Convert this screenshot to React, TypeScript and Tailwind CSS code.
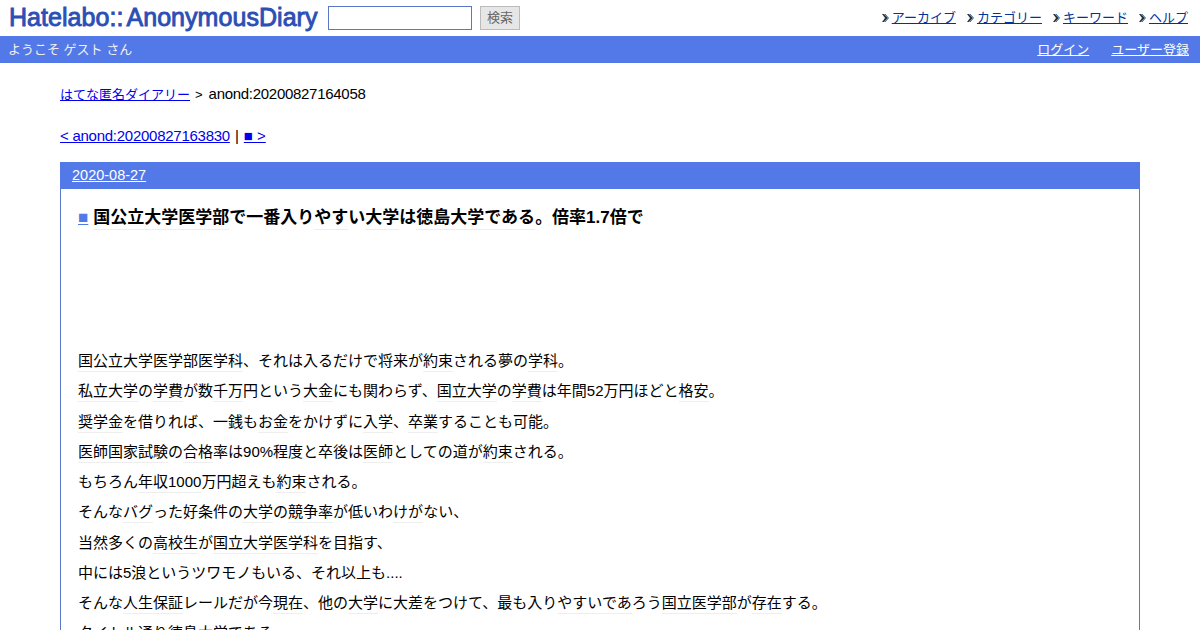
const font = "font-['Liberation_Sans','Noto_Sans_CJK_JP',sans-serif]";

function K({ children }: { children: React.ReactNode }) {
  return <span className="border-b border-[#eeeeee] pb-[2px]">{children}</span>;
}

function Nav({ label }: { label: string }) {
  return (
    <span className="flex items-center gap-[3px]">
      <svg width="7" height="10" viewBox="0 0 7 10">
        <path d="M0 1 L2 1 L6 5 L2 9 L0 9 L3 5 Z" fill="#333333" />
        <path d="M3 1 L6.5 5 L3 9" stroke="#2a6fb8" strokeWidth="1" fill="none" />
      </svg>
      <a className="text-[#003399] underline" href="#">{label}</a>
    </span>
  );
}

export default function App() {
  return (
    <div className={`${font} h-[630px] overflow-hidden bg-white text-black`}>
      <header className="flex h-[36px] items-center justify-between pl-[9px] pr-[12px]">
        <div className="flex items-center">
          <span className="flex w-[319px] whitespace-nowrap text-[25px] tracking-[0.05px] text-[#2b4fb5] [-webkit-text-stroke:0.9px_#2b4fb5]">
            <span className="mr-[3px]">Hatelabo::</span>
            <span>AnonymousDiary</span>
          </span>
          <input className="h-[24px] w-[144px] border border-[#5a77c8] bg-white" />
          <button className="ml-[8px] h-[24px] w-[40px] border border-[#bbbbbb] bg-[#e6e6e6] text-[13px] text-[#666666]">検索</button>
        </div>
        <nav className="flex gap-[11px] text-[13px]">
          <Nav label="アーカイブ" />
          <Nav label="カテゴリー" />
          <Nav label="キーワード" />
          <Nav label="ヘルプ" />
        </nav>
      </header>
      <div className="flex h-[27px] items-center justify-between bg-[#5279e7] pl-[8px] pr-[11px] text-[13px] text-white">
        <span className="text-[#f0f0f0]">ようこそ ゲスト さん</span>
        <span className="flex gap-[22px]">
          <a className="underline" href="#">ログイン</a>
          <a className="underline" href="#">ユーザー登録</a>
        </span>
      </div>
      <main className="px-[60px]">
        <p className="mt-[21px] h-[20px] text-[13px] leading-[20px]">
          <a className="text-[#0000ee] underline" href="#">はてな匿名ダイアリー</a>
          <span className="ml-[5px] mr-[6px]">&gt;</span>
          <span className="text-[15px] tracking-[-0.29px]">anond:20200827164058</span>
        </p>
        <p className="mt-[22px] h-[20px] text-[15px] leading-[20px]">
          <a className="tracking-[-0.26px] text-[#0000ee] underline" href="#">&lt; anond:20200827163830</a>
          <span className="mx-[5px]">|</span>
          <a className="text-[#0000ee] underline" href="#">■ &gt;</a>
        </p>
        <section className="mt-[16px] border border-t-0 border-[#5a77c8]">
          <div className="-mx-px flex h-[27px] items-center bg-[#5279e7] pl-[12px] text-[14.5px] text-white">
            <a className="underline" href="#">2020-08-27</a>
          </div>
          <div className="px-[17px]">
            <h3 className="mt-[17px] h-[24px] text-[17px] font-bold leading-[24px]">
              <a className="mr-[5px] font-normal text-[#5279e7] underline" href="#">■</a>
              <K>国公立大学医学部</K>で一番入り<K>やす</K>い<K>大学</K>は<K>徳島大学である</K>。倍率1.7倍で
            </h3>
            <div className="mt-[116px] text-[15px] leading-[30.25px]">
              <p><K>国公立大学医学部医学科</K>、それは入るだけで将来が<K>約束</K>される夢の<K>学科</K>。</p>
              <p><K>私立大学</K>の<K>学費</K>が数<K>千万</K>円という<K>大金</K>にも関わらず、<K>国立大学</K>の<K>学費</K>は年間52万円ほどと<K>格安</K>。</p>
              <p><K>奨学金</K>を借りれば、一銭も<K>お金</K>をかけずに<K>入学</K>、<K>卒業</K>することも可能。</p>
              <p><K>医師国家試験</K>の<K>合格</K>率は90%程度と卒後は<K>医師</K>としての道が<K>約束</K>される。</p>
              <p>もちろん<K>年収1000</K>万円超えも<K>約束</K>される。</p>
              <p>そんな<K>バグ</K>った好条件の<K>大学</K>の<K>競争率</K>が低いわ<K>けが</K>ない、</p>
              <p>当然多くの<K>高校生</K>が<K>国立大学医学科</K>を目指す、</p>
              <p>中には5浪というツワモノもいる、それ以上も....</p>
              <p>そんな<K>人生保証</K>レールだが今<K>現在</K>、他の<K>大学</K>に大差をつけて、最も入り<K>やすいであ</K>ろう<K>国立医学部</K>が<K>存在</K>する。</p>
              <p>タイトル通り徳島大学である。</p>
            </div>
          </div>
        </section>
      </main>
    </div>
  );
}
